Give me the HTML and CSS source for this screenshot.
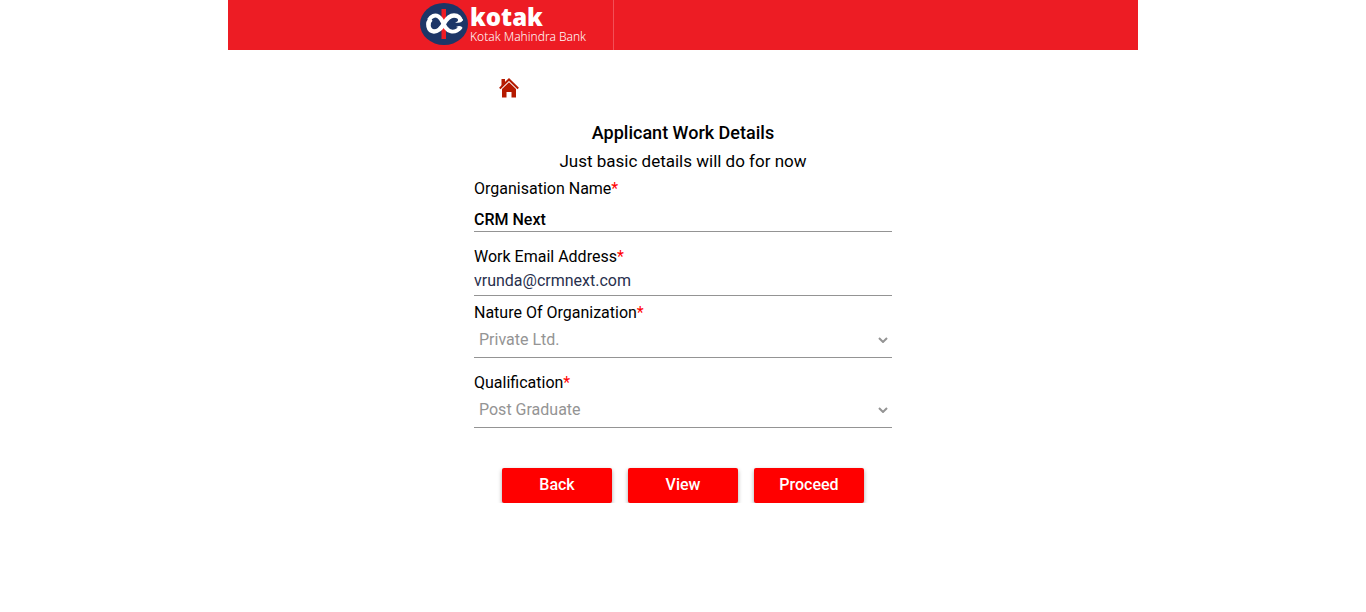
FILE: index.html
```html
<!DOCTYPE html>
<html lang="en">
<head>
<meta charset="utf-8">
<meta name="viewport" content="width=device-width, initial-scale=1">
<title>Applicant Work Details</title>
<link rel="stylesheet" href="styles.css">
</head>
<body>
<div class="page">
  <header class="header">
    <div class="brand">
      <svg class="brand-mark" viewBox="0 0 48 42" aria-hidden="true">
        <ellipse cx="24" cy="21" rx="24" ry="21" fill="#1d3667"/>
        <path d="M21.500 6h4.500v30h-4.500z" fill="#ed1c24"/>
        <path d="M9 17C11 13 15 11.500 18.500 13.500C22.500 16 23 21 26 25C28.500 28.500 33 29.500 37 27.500C39 26.500 40 25.500 40.500 24" fill="none" stroke="#fff" stroke-width="4"/>
        <path d="M11 16C6.500 20 8 28 14 28.500C19 28.500 21.500 25 24 20.500C26.500 16 29 12.500 34 12.500C38 12.500 40.500 15 40.500 18" fill="none" stroke="#fff" stroke-width="4.500"/>
        <path d="M35 19.500Q38 19 38.500 16L43 16Q42 21 35 19.500zM36 24Q41 21.500 42.500 25L39 28Q39.500 24.500 36 24z" fill="#fff"/>
      </svg>
      <div class="brand-text">
        <span class="brand-name">kotak</span>
        <span class="brand-sub">Kotak Mahindra Bank</span>
      </div>
    </div>
  </header>
  <main class="main">
    <a class="home" href="#" aria-label="Home">
      <svg class="home-icon" viewBox="0 0 20 20" aria-hidden="true">
        <path d="M2.500 1h3.500v4L2.500 8.500zM10 4.200l7 6.800v8.500h-4.500V14h-5v5.500H3V11z" fill="#b51a00"/>
        <path d="M.8 10.500L10 1.500l9.200 9" fill="none" stroke="#b51a00" stroke-width="2"/>
      </svg>
    </a>
    <h1 class="title">Applicant Work Details</h1>
    <p class="subtitle">Just basic details will do for now</p>
    <form class="form">
      <div class="field field-organisation">
        <label class="label" for="organisation">Organisation Name<span class="required">*</span></label>
        <input class="control control-strong" id="organisation" type="text" value="CRM Next">
      </div>
      <div class="field field-email">
        <label class="label" for="email">Work Email Address<span class="required">*</span></label>
        <input class="control control-email" id="email" type="email" value="vrunda@crmnext.com">
      </div>
      <div class="field">
        <label class="label" for="nature">Nature Of Organization<span class="required">*</span></label>
        <div class="select-wrap">
          <select class="control control-select" id="nature"><option>Private Ltd.</option></select>
          <svg class="chevron" viewBox="0 0 10 6" aria-hidden="true"><path d="M1 1l4 4 4-4" fill="none" stroke="#949494" stroke-width="2"/></svg>
        </div>
      </div>
      <div class="field field-qualification">
        <label class="label" for="qualification">Qualification<span class="required">*</span></label>
        <div class="select-wrap">
          <select class="control control-select" id="qualification"><option>Post Graduate</option></select>
          <svg class="chevron" viewBox="0 0 10 6" aria-hidden="true"><path d="M1 1l4 4 4-4" fill="none" stroke="#949494" stroke-width="2"/></svg>
        </div>
      </div>
      <div class="actions">
        <button class="button" type="button">Back</button>
        <button class="button" type="button">View</button>
        <button class="button" type="button">Proceed</button>
      </div>
    </form>
  </main>
</div>
</body>
</html>
```
FILE: styles.css
```css
* { box-sizing: border-box; }
body {
  margin: 0;
  background: #fff;
  color: #000;
  font-family: Roboto, "Liberation Sans", sans-serif;
  font-size: 16px;
}
.page { max-width: 910px; margin: 0 auto; }
.header {
  display: flex;
  min-height: 50px;
  padding-left: 192px;
  background: #ed1c24;
}
.brand {
  display: flex;
  gap: 2px;
  padding: 3px 27px 0 0;
  border-right: 1px solid #f25057;
  color: #fff;
}
.brand-mark { width: 48px; height: 42px; }
.brand-text {
  display: flex;
  flex-direction: column;
  font-family: "Open Sans", sans-serif;
}
.brand-name { font-size: 24px; font-weight: 800; line-height: 28px; }
.brand-sub {
  font-family: "Noto Sans", sans-serif;
  font-size: 12px;
  font-weight: 300;
  line-height: 12px;
  white-space: nowrap;
}
.main {
  max-width: 418px;
  margin: 0 auto;
  padding-top: 28px;
}
.home { display: block; width: 20px; margin-left: 25px; }
.home-icon { display: block; width: 20px; height: 20px; }
.title {
  margin: 23px 0 0;
  font-size: 18px;
  font-weight: 500;
  line-height: 24px;
  text-align: center;
}
.subtitle { margin: 4px 0 0; font-size: 17px; line-height: 24px; text-align: center; }
.form { padding-top: 6px; }
.field { display: flex; flex-direction: column; }
.field-organisation { gap: 8px; }
.field-email { margin: 15px 0 7px; }
.field-qualification { margin-top: 15px; }
.label { line-height: 20px; }
.required { color: #f00; }
.control {
  width: 100%;
  height: 25px;
  margin: 0;
  padding: 0;
  border: 0;
  border-bottom: 1px solid #949494;
  border-radius: 0;
  outline: 0;
  background: transparent;
  font: inherit;
}
.control-strong { color: #000; font-weight: 500; }
.control-email { height: 29px; padding-bottom: 2px; color: #28304d; }
.select-wrap { position: relative; }
.control-select {
  display: block;
  height: 35px;
  padding-bottom: 2px;
  padding-left: 5px;
  appearance: none;
  color: #949494;
}
.chevron {
  position: absolute;
  top: 14px;
  right: 4px;
  width: 10px;
  height: 6px;
  pointer-events: none;
}
.actions {
  display: flex;
  justify-content: center;
  gap: 16px;
  margin-top: 40px;
}
.button {
  width: 110px;
  height: 35px;
  padding: 0 0 2px;
  border: 0;
  border-radius: 2px;
  background: #f00;
  box-shadow: 0 2px 4px rgba(0, 0, 0, .35);
  color: #fff;
  font: inherit;
  font-weight: 500;
}
```
